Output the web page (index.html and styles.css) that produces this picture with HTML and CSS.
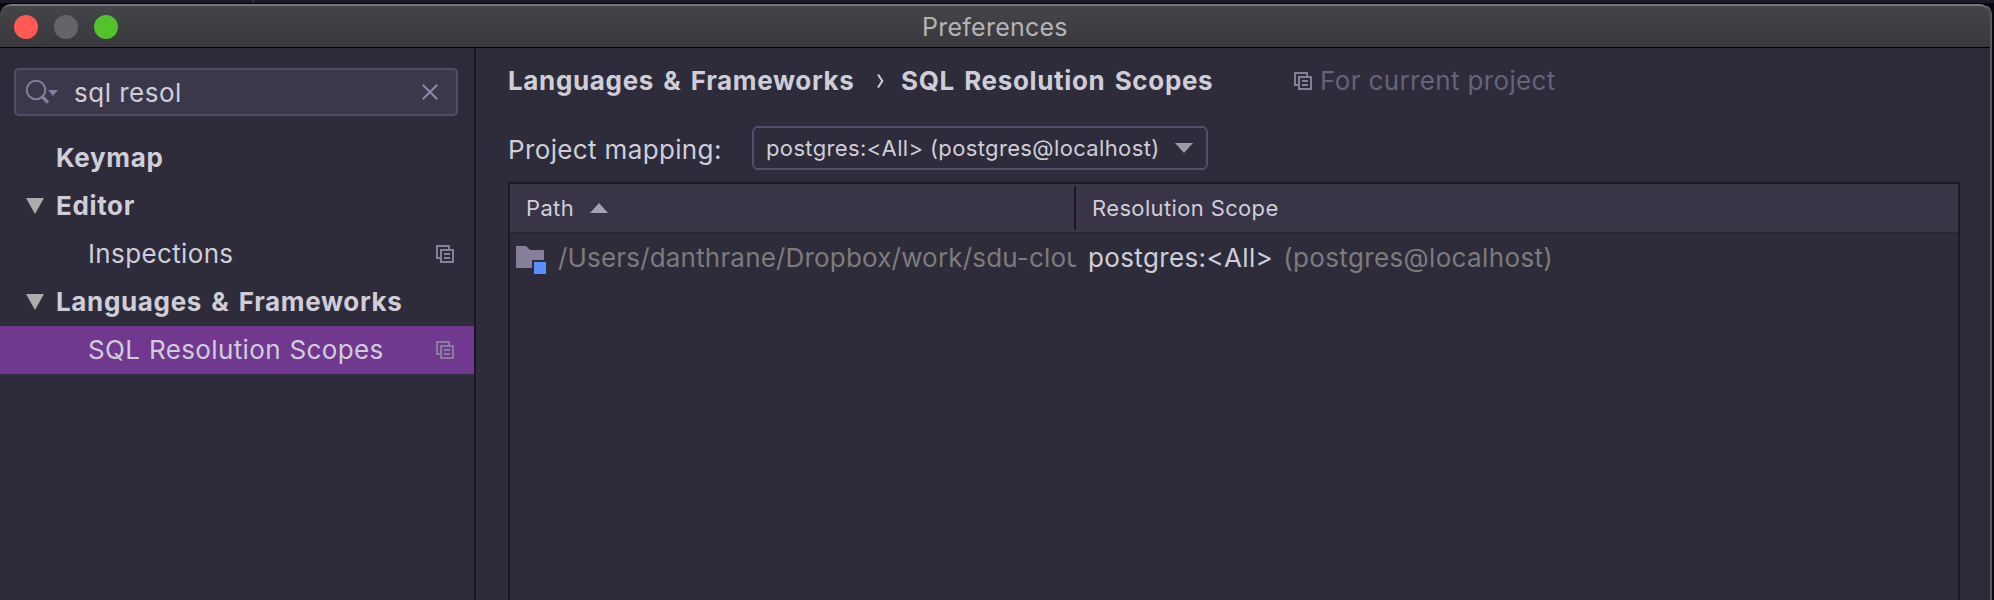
FILE: index.html
```html
<!DOCTYPE html>
<html lang="en">
<head>
<meta charset="utf-8">
<title>Preferences</title>
<link rel="stylesheet" href="styles.css">
</head>
<body>
<svg class="defs" width="0" height="0">
  <symbol id="project" viewBox="0 0 18 18">
    <path d="M0 0h14v4h4v14H4v-4H0zM2 2v10h2V4h8V2zM6 6v10h10V6z" fill-rule="evenodd"/>
    <path d="M8 8h6v2H8zM8 12h6v2H8z"/>
  </symbol>
</svg>
<div class="backdrop"><span class="backdrop-line"></span></div>
<div class="window">
  <header class="titlebar">
    <div class="lights"><i class="light close"></i><i class="light minimize"></i><i class="light maximize"></i></div>
    <h1 class="title">Preferences</h1>
  </header>
  <div class="body">
    <aside class="sidebar">
      <div class="search">
        <svg class="search-icon" width="34" height="26" viewBox="0 0 34 26"><circle cx="11" cy="11" r="9.3" fill="none" stroke="#857ea0" stroke-width="2"/><path d="M16.500 17l6.500 6.500" fill="none" stroke="#857ea0" stroke-width="3.200"/><path d="M23 11h10l-5 6z" fill="#857ea0"/></svg>
        <span class="query">sql resol</span>
        <svg class="clear" width="16" height="16" viewBox="0 0 16 16"><path d="M.7.7l14.600 14.600M15.300.7L.7 15.300" stroke="#8d86a5" stroke-width="2"/></svg>
      </div>
      <nav class="tree">
        <div class="row group"><span class="twist"></span><span class="group-name">Keymap</span></div>
        <div class="row group"><span class="twist"><svg width="18" height="16"><path d="M0 0h18L9 16z" fill="#acacac"/></svg></span><span class="group-name">Editor</span></div>
        <div class="row leaf"><span>Inspections</span><svg class="mark"><use href="#project"/></svg></div>
        <div class="row group"><span class="twist"><svg width="18" height="16"><path d="M0 0h18L9 16z" fill="#acacac"/></svg></span><span class="group-name">Languages &amp; Frameworks</span></div>
        <div class="row leaf selected"><span>SQL Resolution Scopes</span><svg class="mark"><use href="#project"/></svg></div>
      </nav>
    </aside>
    <main class="content">
      <div class="crumbs">
        <span class="crumb first">Languages &amp; Frameworks</span>
        <svg class="chevron" width="7" height="14" viewBox="0 0 7 14"><path d="M1 .5l4.300 6.500L1 13.500" fill="none" stroke="#cfced8" stroke-width="2"/></svg>
        <span class="crumb last">SQL Resolution Scopes</span>
        <svg class="mark"><use href="#project"/></svg>
        <span class="scope-note">For current project</span>
      </div>
      <div class="mapping">
        <span class="mapping-label">Project mapping:</span>
        <div class="combo"><span class="combo-text">postgres:&lt;All&gt; (postgres@localhost)</span><svg width="18" height="10"><path d="M0 0h18L9 10z" fill="#9e99ad"/></svg></div>
      </div>
      <div class="table">
        <div class="thead">
          <div class="th path"><span>Path</span><svg width="18" height="10"><path d="M0 10h18L9 0z" fill="#a6a1b4"/></svg></div>
          <div class="divider"></div>
          <div class="th"><span>Resolution Scope</span></div>
        </div>
        <div class="tr">
          <div class="td path">
            <svg class="folder" width="30" height="28" viewBox="0 0 30 28"><path d="M0 0h10l4 4h14v10H16v8H0z" fill="#877f9a"/><path d="M18 16h12v12H18z" fill="#598eff"/></svg>
            <span class="file">/Users/danthrane/Dropbox/work/sdu-clou</span>
          </div>
          <div class="td scope"><span class="name">postgres:&lt;All&gt;</span><span class="source">(postgres@localhost)</span></div>
        </div>
      </div>
    </main>
  </div>
</div>
</body>
</html>
```
FILE: styles.css
```css
* { box-sizing: border-box; }
body { margin: 0; width: 1994px; height: 600px; overflow: hidden; display: flex; flex-direction: column; background: #08080c; color: #cfced8; font-family: Inter, "Liberation Sans", sans-serif; font-size: 26px; line-height: 32px; letter-spacing: .36px; white-space: nowrap; }
svg { display: block; flex: none; }
.defs { position: absolute; }
.backdrop { height: 3px; flex: none; background: #1b1a26; }
.backdrop-line { display: block; width: 2px; height: 3px; margin-left: 252px; background: #32303e; }
.window { width: 1992px; flex: 1; min-height: 0; display: flex; flex-direction: column; border-top: 1px solid #000; border-right: 2px solid #5b5865; border-radius: 12px 12px 0 0; background: #2e2c3a; overflow: hidden; }
.titlebar { height: 44px; flex: none; display: flex; align-items: center; background: linear-gradient(#45464a, #39383c); border-top: 2px solid #76777b; border-bottom: 1px solid #000; border-radius: 10px 10px 0 0; }
.lights { display: flex; gap: 16px; width: 922px; padding-left: 14px; }
.light { width: 24px; height: 24px; border-radius: 50%; }
.close { background: #ff5a52; }
.minimize { background: #656469; }
.maximize { background: #54c22b; }
.title { margin: 0; font-size: 25px; font-weight: 400; letter-spacing: .25px; color: #b4b4b7; }
.body { flex: 1; display: flex; min-height: 0; }
.sidebar { width: 476px; flex: none; border-right: 2px solid #1d1924; }
.search { margin: 20px 16px 18px 14px; height: 48px; border: 2px solid #504d65; border-radius: 5px; background: #3c384c; display: flex; align-items: center; padding: 0 18px 0 9px; }
.query { margin-left: 15px; padding-top: 2px; flex: 1; letter-spacing: .5px; }
.row { height: 48px; display: flex; align-items: center; word-spacing: 1px; }
.group { padding-left: 26px; }
.group-name, .crumb { font-weight: 700; letter-spacing: .65px; word-spacing: 2.5px; }
.group-name { padding-bottom: 1px; }
.twist { width: 30px; }
.leaf { padding: 0 20px 0 88px; justify-content: space-between; }
.selected { background: #70398f; }
.mark { width: 18px; height: 18px; fill: #877f9a; }
.content { flex: 1; min-width: 0; padding: 0 30px 0 32px; display: flex; flex-direction: column; }
.crumbs { height: 66px; display: flex; align-items: center; }
.crumb.first { width: 369px; }
.crumb.last { width: 393px; }
.chevron { margin-right: 17px; }
.scope-note { margin-left: 8px; color: #67627a; }
.mapping { height: 66px; display: flex; align-items: flex-start; padding-top: 12px; }
.mapping-label { width: 244px; line-height: 47px; }
.combo { width: 456px; height: 44px; border: 2px solid #534e70; border-radius: 6px; display: flex; align-items: center; justify-content: space-between; padding: 0 13px 0 12px; font-size: 22px; }
.table { flex: 1; margin-top: 2px; border: solid #1d1924; border-width: 2px 2px 0; }
.thead { display: flex; align-items: center; height: 50px; border-bottom: 2px solid #2a2632; background: #393446; font-size: 22px; }
.th { padding-left: 16px; display: flex; align-items: center; gap: 16px; }
.th.path { width: 564px; }
.divider { width: 2px; height: 44px; background: #1d1924; }
.tr { display: flex; align-items: center; height: 48px; }
.td { display: flex; align-items: center; }
.td.path { width: 566px; overflow: hidden; padding-left: 6px; gap: 12px; }
.folder { margin-top: 4px; }
.file, .source { color: #7d7b7c; }
.file { letter-spacing: .18px; }
.scope { padding-left: 12px; gap: 10px; }
```
